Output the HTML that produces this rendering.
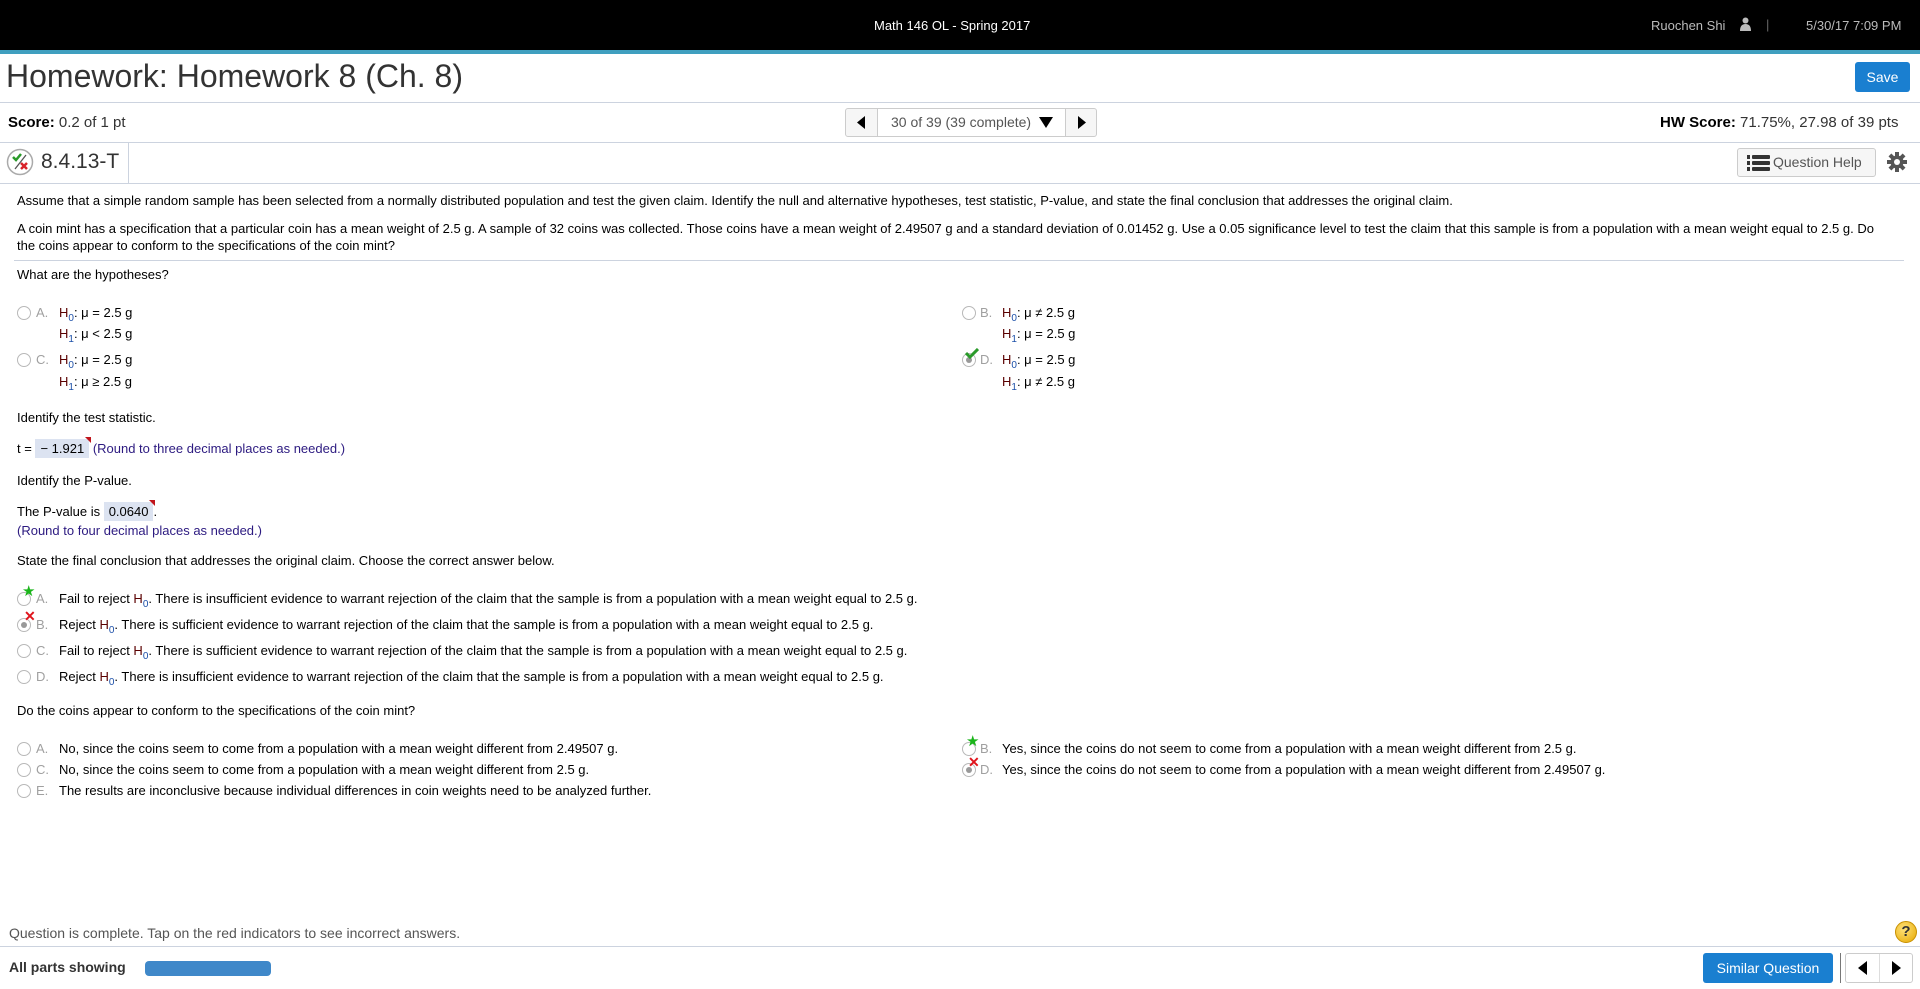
<!DOCTYPE html>
<html><head><meta charset="utf-8"><style>
*{margin:0;padding:0;box-sizing:border-box}
body{width:1920px;height:989px;position:relative;overflow:hidden;background:#fff;font-family:"Liberation Sans",Arial,sans-serif;color:#000}
.a{position:absolute;white-space:nowrap}
.t{font-size:13px;letter-spacing:0;line-height:16px}
.hr{position:absolute;left:0;width:1920px;height:1px;background:#ccd3df}
.rad{position:absolute;width:14px;height:14px;border:1px solid #b8b8b8;border-radius:50%;background:#fff}
.lt{color:#a0a0a0}
.H{color:#5a0000}
.sb{font-size:10px;position:relative;top:4px;color:#1b4fa8}
.ans{background:#dce3f1;padding:2px 5px;position:relative}
.ans:after{content:"";position:absolute;right:-2px;top:-2px;border-top:6px solid #c0141b;border-left:6px solid transparent}
.pur{color:#2c1a80}
.btn{position:absolute;border:1px solid #ccc;border-radius:3px;background:#f6f6f6}
</style></head><body>
<div class="a" style="left:0;top:0;width:1920px;height:50px;background:#000"></div>
<div class="a" style="left:0;top:50px;width:1920px;height:4px;background:#3f9fbf"></div>
<div class="a" style="left:874px;top:18px;color:#fff;font-size:13px">Math 146 OL - Spring 2017</div>
<div class="a" style="left:1651px;top:18px;color:#bbb;font-size:13px">Ruochen Shi</div>
<svg class="a" style="left:1740px;top:17px" width="11" height="14" viewBox="0 0 11 14"><circle cx="5.5" cy="3.5" r="3" fill="#bbb"/><path d="M0 14 Q0 7 5.5 7 Q11 7 11 14Z" fill="#bbb"/></svg>
<div class="a" style="left:1766px;top:17px;color:#666;font-size:13px">|</div>
<div class="a" style="left:1806px;top:18px;color:#bbb;font-size:13px">5/30/17 7:09 PM</div>

<div class="a" style="left:6px;top:58px;font-size:32px;color:#333">Homework: Homework 8 (Ch. 8)</div>
<div class="a" style="left:1855px;top:62px;width:55px;height:30px;background:#1a7fd0;border-radius:3px;color:#fff;font-size:14px;text-align:center;line-height:30px">Save</div>
<div class="hr" style="top:102px"></div>

<div class="a" style="left:8px;top:114px;font-size:15px;color:#333"><b style="color:#000">Score:</b> 0.2 of 1 pt</div>
<div class="btn" style="left:845px;top:108px;width:252px;height:29px"></div>
<div class="a" style="left:877px;top:108px;width:1px;height:29px;background:#ccc"></div>
<div class="a" style="left:1065px;top:108px;width:1px;height:29px;background:#ccc"></div>
<div class="a" style="left:878px;top:109px;width:187px;height:27px;background:#fff"></div>
<svg class="a" style="left:857px;top:116px" width="8" height="13"><path d="M8 0V13L0 6.5Z" fill="#000"/></svg>
<div class="a" style="left:891px;top:114px;font-size:14px;color:#555">30 of 39 (39 complete)</div>
<svg class="a" style="left:1039px;top:117px" width="14" height="11"><path d="M0 0H14L7 11Z" fill="#000"/></svg>
<svg class="a" style="left:1078px;top:116px" width="8" height="13"><path d="M0 0V13L8 6.5Z" fill="#000"/></svg>
<div class="a" style="left:1660px;top:114px;font-size:15px;color:#333"><b style="color:#000">HW Score:</b> 71.75%, 27.98 of 39 pts</div>
<div class="hr" style="top:142px"></div>

<svg class="a" style="left:6px;top:148px" width="28" height="28" viewBox="0 0 28 28"><circle cx="14" cy="14" r="12.5" fill="#fff" stroke="#aaa" stroke-width="1.5"/><path d="M7 9l3 3 5-6" stroke="#2a9a2a" stroke-width="2.5" fill="none"/><path d="M9 21L20 7" stroke="#555" stroke-width="1.3"/><path d="M15 15l6 6M21 15l-6 6" stroke="#d8232a" stroke-width="2.5"/></svg>
<div class="a" style="left:41px;top:150px;font-size:21px;color:#333">8.4.13-T</div>
<div class="a" style="left:128px;top:143px;width:1px;height:40px;background:#ccd3df"></div>
<div class="btn" style="left:1737px;top:148px;width:139px;height:29px"></div>
<svg class="a" style="left:1747px;top:155px" width="23" height="16"><g fill="#333"><rect x="0" y="0" width="3" height="4"/><rect x="0" y="6" width="3" height="4"/><rect x="0" y="12" width="3" height="4"/><rect x="5" y="0" width="18" height="4" rx="1"/><rect x="5" y="6" width="18" height="4" rx="1"/><rect x="5" y="12" width="18" height="4" rx="1"/></g></svg>
<div class="a" style="left:1773px;top:154px;font-size:14px;color:#555">Question Help</div>
<svg class="a" style="left:1887px;top:152px" width="20" height="20" viewBox="0 0 20 20"><g fill="#555"><circle cx="10" cy="10" r="6.5"/><rect x="8" y="0" width="4" height="20"/><rect x="0" y="8" width="20" height="4"/><rect x="8" y="0" width="4" height="20" transform="rotate(45 10 10)"/><rect x="8" y="0" width="4" height="20" transform="rotate(-45 10 10)"/></g><circle cx="10" cy="10" r="3" fill="#fff"/></svg>
<div class="hr" style="top:183px"></div>

<div class="a t" style="left:17px;top:193px">Assume that a simple random sample has been selected from a normally distributed population and test the given claim. Identify the null and alternative hypotheses, test statistic, P-value, and state the final conclusion that addresses the original claim.</div>
<div class="a t" style="left:17px;top:221px">A coin mint has a specification that a particular coin has a mean weight of 2.5 g. A sample of 32 coins was collected. Those coins have a mean weight of 2.49507 g and a standard deviation of 0.01452 g. Use a 0.05 significance level to test the claim that this sample is from a population with a mean weight equal to 2.5 g. Do</div>
<div class="a t" style="left:17px;top:238px">the coins appear to conform to the specifications of the coin mint?</div>
<div class="a" style="left:14px;top:260px;width:1890px;height:1px;background:#ccd3df"></div>
<div class="a t" style="left:17px;top:267px">What are the hypotheses?</div>

<div class="rad" style="left:17px;top:306px"></div><div class="a t lt" style="left:36px;top:305px">A.</div>
<div class="a t" style="left:59px;top:305px"><span class="H">H</span><span class="sb">0</span>: μ = 2.5 g</div>
<div class="a t" style="left:59px;top:326px"><span class="H">H</span><span class="sb">1</span>: μ &lt; 2.5 g</div>
<div class="rad" style="left:17px;top:353px"></div><div class="a t lt" style="left:36px;top:352px">C.</div>
<div class="a t" style="left:59px;top:352px"><span class="H">H</span><span class="sb">0</span>: μ = 2.5 g</div>
<div class="a t" style="left:59px;top:374px"><span class="H">H</span><span class="sb">1</span>: μ ≥ 2.5 g</div>
<div class="rad" style="left:962px;top:306px"></div><div class="a t lt" style="left:980px;top:305px">B.</div>
<div class="a t" style="left:1002px;top:305px"><span class="H">H</span><span class="sb">0</span>: μ ≠ 2.5 g</div>
<div class="a t" style="left:1002px;top:326px"><span class="H">H</span><span class="sb">1</span>: μ = 2.5 g</div>
<div class="rad" style="left:962px;top:353px"><div style="position:absolute;left:3px;top:3px;width:6px;height:6px;border-radius:50%;background:#999"></div></div>
<svg class="a" style="left:965px;top:348px" width="14" height="11"><path d="M1 5l4 4 8-8" stroke="#2a9a2a" stroke-width="3" fill="none"/></svg>
<div class="a t lt" style="left:980px;top:352px">D.</div>
<div class="a t" style="left:1002px;top:352px"><span class="H">H</span><span class="sb">0</span>: μ = 2.5 g</div>
<div class="a t" style="left:1002px;top:374px"><span class="H">H</span><span class="sb">1</span>: μ ≠ 2.5 g</div>

<div class="a t" style="left:17px;top:410px">Identify the test statistic.</div>
<div class="a t" style="left:17px;top:441px">t = <span class="ans">− 1.921</span> <span class="pur">(Round to three decimal places as needed.)</span></div>
<div class="a t" style="left:17px;top:473px">Identify the P-value.</div>
<div class="a t" style="left:17px;top:504px">The P-value is <span class="ans">0.0640</span>.</div>
<div class="a t pur" style="left:17px;top:523px">(Round to four decimal places as needed.)</div>
<div class="a t" style="left:17px;top:553px">State the final conclusion that addresses the original claim. Choose the correct answer below.</div>

<div class="rad" style="left:17px;top:592px"></div><div class="a" style="left:22px;top:582px;color:#1bb51b;font-size:15px">★</div><div class="a t lt" style="left:36px;top:591px">A.</div>
<div class="a t" style="left:59px;top:591px">Fail to reject <span class="H">H</span><span class="sb">0</span>. There is insufficient evidence to warrant rejection of the claim that the sample is from a population with a mean weight equal to 2.5 g.</div>
<div class="rad" style="left:17px;top:618px"><div style="position:absolute;left:3px;top:3px;width:6px;height:6px;border-radius:50%;background:#999"></div></div><div class="a" style="left:24px;top:608px;color:#e0141c;font-size:14px;font-weight:bold">✕</div><div class="a t lt" style="left:36px;top:617px">B.</div>
<div class="a t" style="left:59px;top:617px">Reject <span class="H">H</span><span class="sb">0</span>. There is sufficient evidence to warrant rejection of the claim that the sample is from a population with a mean weight equal to 2.5 g.</div>
<div class="rad" style="left:17px;top:644px"></div><div class="a t lt" style="left:36px;top:643px">C.</div>
<div class="a t" style="left:59px;top:643px">Fail to reject <span class="H">H</span><span class="sb">0</span>. There is sufficient evidence to warrant rejection of the claim that the sample is from a population with a mean weight equal to 2.5 g.</div>
<div class="rad" style="left:17px;top:670px"></div><div class="a t lt" style="left:36px;top:669px">D.</div>
<div class="a t" style="left:59px;top:669px">Reject <span class="H">H</span><span class="sb">0</span>. There is insufficient evidence to warrant rejection of the claim that the sample is from a population with a mean weight equal to 2.5 g.</div>

<div class="a t" style="left:17px;top:703px">Do the coins appear to conform to the specifications of the coin mint?</div>
<div class="rad" style="left:17px;top:742px"></div><div class="a t lt" style="left:36px;top:741px">A.</div>
<div class="a t" style="left:59px;top:741px">No, since the coins seem to come from a population with a mean weight different from 2.49507 g.</div>
<div class="rad" style="left:17px;top:763px"></div><div class="a t lt" style="left:36px;top:762px">C.</div>
<div class="a t" style="left:59px;top:762px">No, since the coins seem to come from a population with a mean weight different from 2.5 g.</div>
<div class="rad" style="left:17px;top:784px"></div><div class="a t lt" style="left:36px;top:783px">E.</div>
<div class="a t" style="left:59px;top:783px">The results are inconclusive because individual differences in coin weights need to be analyzed further.</div>
<div class="rad" style="left:962px;top:742px"></div><div class="a" style="left:966px;top:732px;color:#1bb51b;font-size:15px">★</div><div class="a t lt" style="left:980px;top:741px">B.</div>
<div class="a t" style="left:1002px;top:741px">Yes, since the coins do not seem to come from a population with a mean weight different from 2.5 g.</div>
<div class="rad" style="left:962px;top:763px"><div style="position:absolute;left:3px;top:3px;width:6px;height:6px;border-radius:50%;background:#999"></div></div><div class="a" style="left:968px;top:754px;color:#e0141c;font-size:14px;font-weight:bold">✕</div><div class="a t lt" style="left:980px;top:762px">D.</div>
<div class="a t" style="left:1002px;top:762px">Yes, since the coins do not seem to come from a population with a mean weight different from 2.49507 g.</div>

<div class="a" style="left:9px;top:925px;font-size:14px;color:#555">Question is complete. Tap on the red indicators to see incorrect answers.</div>
<div class="a" style="left:1895px;top:921px;width:22px;height:22px;border-radius:50%;background:radial-gradient(circle at 40% 35%,#ffe27a,#e6a800);border:1px solid #c89000;text-align:center;font-weight:bold;font-size:15px;line-height:20px;color:#333">?</div>
<div class="hr" style="top:946px"></div>
<div class="a" style="left:9px;top:959px;font-size:14px;font-weight:bold;color:#333">All parts showing</div>
<div class="a" style="left:145px;top:961px;width:126px;height:15px;border-radius:4px;background:#3f88c9"></div>
<div class="a" style="left:1703px;top:953px;width:130px;height:30px;border-radius:3px;background:#1a7fd0;color:#fff;font-size:14px;text-align:center;line-height:30px">Similar Question</div>
<div class="a" style="left:1840px;top:953px;width:1px;height:30px;background:#777"></div>
<div class="btn" style="left:1845px;top:953px;width:68px;height:30px;background:#fff"></div>
<div class="a" style="left:1879px;top:954px;width:1px;height:28px;background:#ddd"></div>
<svg class="a" style="left:1858px;top:961px" width="9" height="14"><path d="M9 0V14L0 7Z" fill="#000"/></svg>
<svg class="a" style="left:1892px;top:961px" width="9" height="14"><path d="M0 0V14L9 7Z" fill="#000"/></svg>
</body></html>
